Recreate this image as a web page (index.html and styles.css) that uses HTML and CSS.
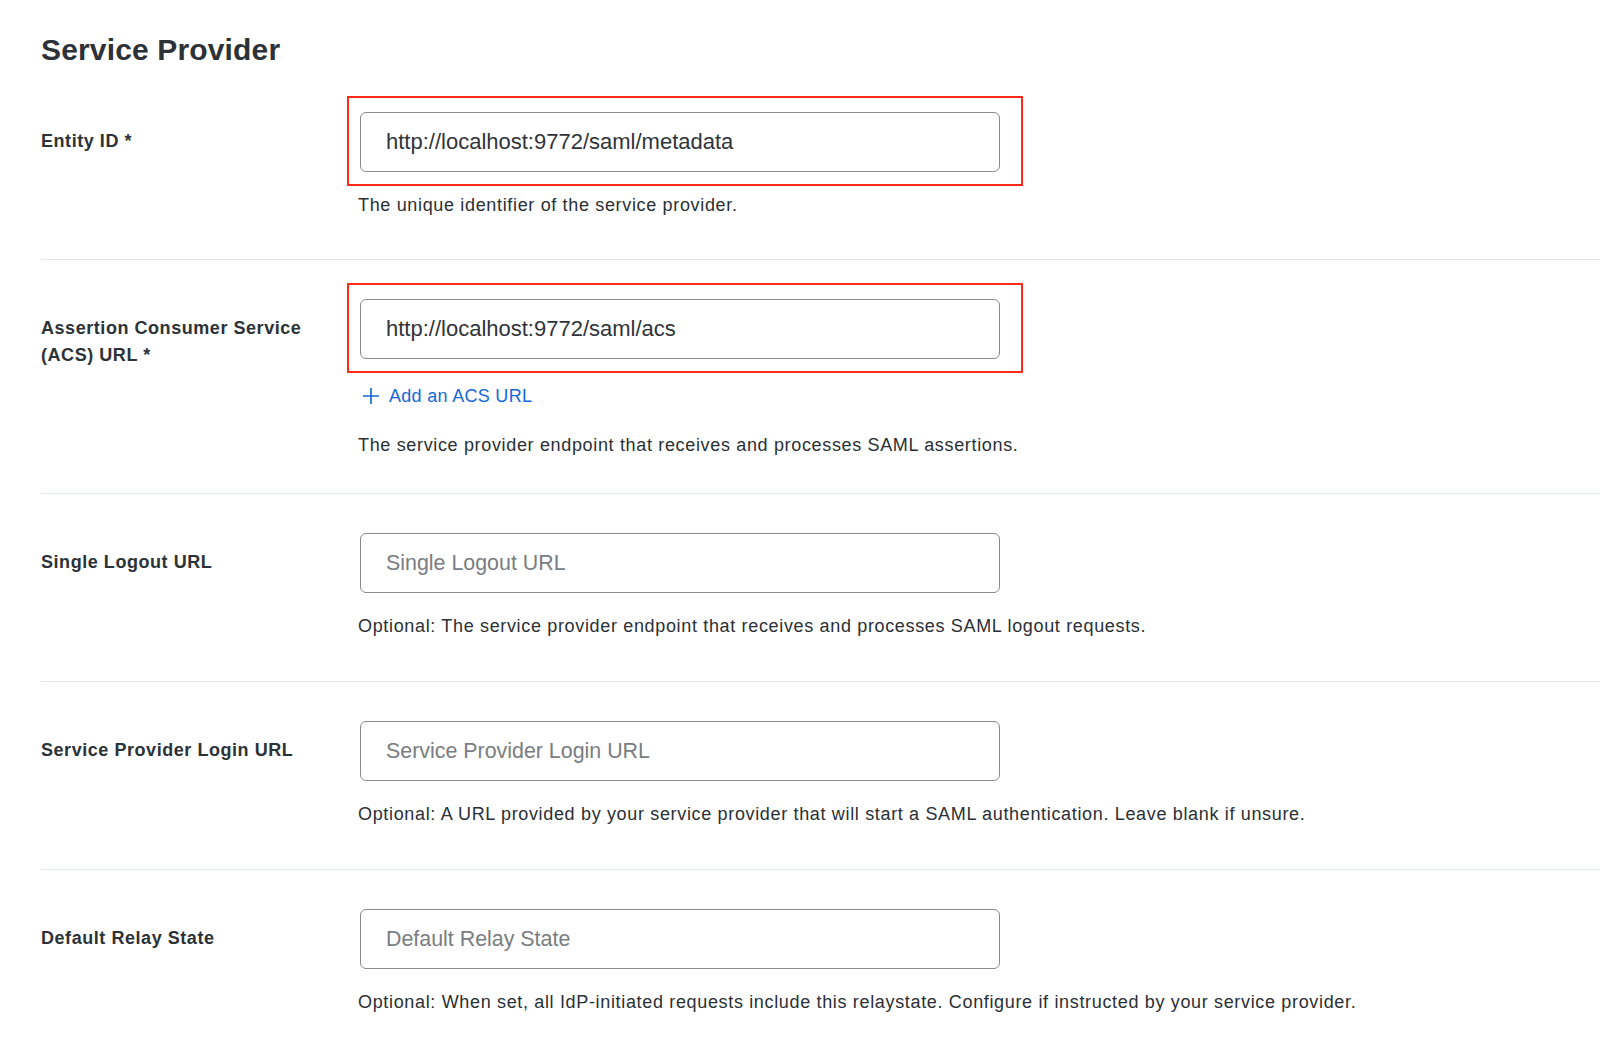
FILE: index.html
```html
<!DOCTYPE html>
<html lang="en">
<head>
<meta charset="utf-8">
<title>Service Provider</title>
<link rel="stylesheet" href="styles.css">
</head>
<body>
<main class="page">
  <h1 class="title">Service Provider</h1>

  <section class="row row-first">
    <label class="label" for="entity">Entity ID *</label>
    <div class="field">
      <div class="highlight">
        <input class="input" id="entity" type="text" value="http://localhost:9772/saml/metadata">
        <span class="mark"></span>
      </div>
      <p class="help">The unique identifier of the service provider.</p>
    </div>
  </section>

  <section class="row row-acs">
    <label class="label" for="acs">Assertion Consumer Service<br>(ACS) URL *</label>
    <div class="field">
      <div class="highlight">
        <input class="input" id="acs" type="text" value="http://localhost:9772/saml/acs">
        <span class="mark"></span>
      </div>
      <a class="add-link" href="#">
        <svg class="plus" viewBox="0 0 18 18" width="18" height="18" aria-hidden="true"><path d="M9 1v16M1 9h16" stroke="currentColor" stroke-width="1.7" fill="none"/></svg>
        <span>Add an ACS URL</span>
      </a>
      <p class="help help-acs">The service provider endpoint that receives and processes SAML assertions.</p>
    </div>
  </section>

  <section class="row">
    <label class="label" for="slo">Single Logout URL</label>
    <div class="field">
      <input class="input" id="slo" type="text" placeholder="Single Logout URL">
      <p class="help">Optional: The service provider endpoint that receives and processes SAML logout requests.</p>
    </div>
  </section>

  <section class="row">
    <label class="label" for="login">Service Provider Login URL</label>
    <div class="field">
      <input class="input" id="login" type="text" placeholder="Service Provider Login URL">
      <p class="help">Optional: A URL provided by your service provider that will start a SAML authentication. Leave blank if unsure.</p>
    </div>
  </section>

  <section class="row">
    <label class="label" for="relay">Default Relay State</label>
    <div class="field">
      <input class="input" id="relay" type="text" placeholder="Default Relay State">
      <p class="help">Optional: When set, all IdP-initiated requests include this relaystate. Configure if instructed by your service provider.</p>
    </div>
  </section>
</main>
</body>
</html>
```

FILE: styles.css
```css
* { box-sizing: border-box; }

html, body {
  margin: 0;
  padding: 0;
  background: #ffffff;
}

body {
  font-family: "Liberation Sans", Arial, Helvetica, sans-serif;
  color: #2c3338;
}

.page {
  padding-left: 41px;
  overflow: hidden;
}

.title {
  margin: 32px 0 0 0;
  font-size: 30px;
  line-height: 36px;
  font-weight: 700;
  letter-spacing: 0.15px;
  color: #2c3237;
}

.row {
  display: grid;
  grid-template-columns: 319px 1fr;
  border-top: 1px solid #e3e8ee;
  padding-top: 39px;
  padding-bottom: 43px;
}

.row-first {
  border-top: none;
  padding-top: 44px;
  padding-bottom: 42px;
}

.row-acs {
  padding-bottom: 36px;
}

.label {
  padding-top: 16px;
  font-size: 18px;
  line-height: 27px;
  font-weight: 700;
  letter-spacing: 0.55px;
  color: #2c3338;
}

.field {
  display: flex;
  flex-direction: column;
  align-items: flex-start;
}

.highlight {
  position: relative;
}

.mark {
  position: absolute;
  left: -13px;
  right: -23px;
  top: -16px;
  bottom: -14px;
  border: 2px solid #ff2a17;
  pointer-events: none;
}

.input {
  display: block;
  width: 640px;
  height: 60px;
  margin: 0;
  padding: 0 25px;
  border: 1px solid #8a8a8a;
  border-radius: 6px;
  font-family: "Liberation Sans", Arial, Helvetica, sans-serif;
  font-size: 22px;
  color: #30343a;
  background: #ffffff;
  outline: none;
}

.input::placeholder {
  font-size: 21.4px;
  color: #7a7d81;
  opacity: 1;
}

.help {
  margin: 21px 0 0 -2px;
  font-size: 18px;
  line-height: 24px;
  letter-spacing: 0.66px;
  color: #2a3035;
}

.help-acs {
  margin-top: 25px;
}

.add-link {
  display: flex;
  align-items: center;
  gap: 9px;
  margin-top: 25px;
  margin-left: 2px;
  font-size: 18px;
  line-height: 24px;
  letter-spacing: 0.3px;
  color: #1569d6;
  text-decoration: none;
}

.plus {
  display: block;
  color: #1569d6;
}
```
